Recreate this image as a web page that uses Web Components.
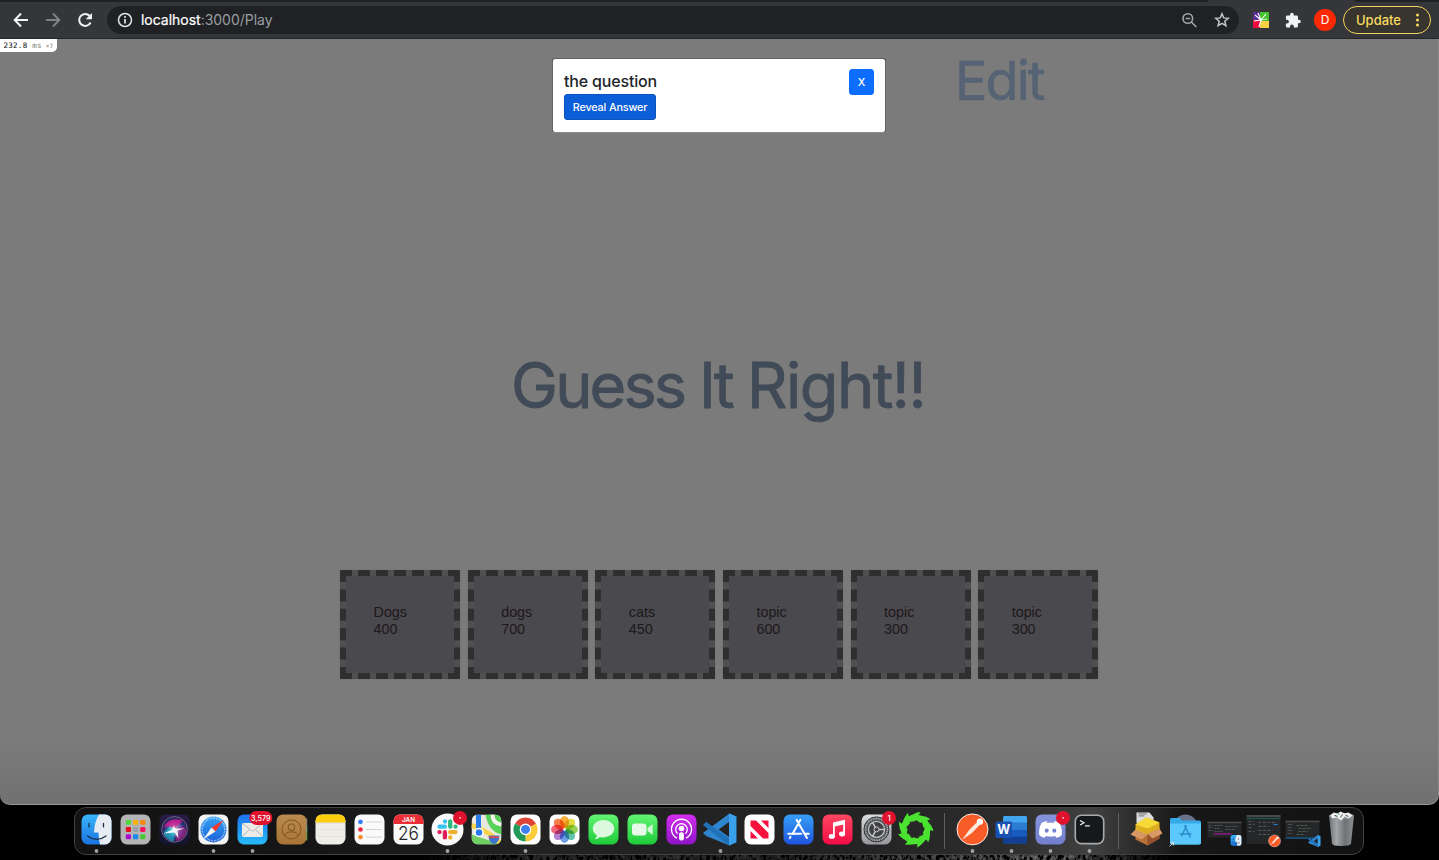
<!DOCTYPE html>
<html lang="en">
<head>
<meta charset="utf-8">
<title>Guess It Right</title>
<style>
html,body{margin:0;height:100%;background:#000;overflow:hidden}
body{font-family:Inter,"Liberation Sans",sans-serif}
</style>
</head>
<body>
<desktop-view></desktop-view>
<script>
const define = (name, html, setup) => {
  const tpl = document.createElement('template');
  tpl.innerHTML = html;
  customElements.define(name, class extends HTMLElement {
    constructor() {
      super();
      this.attachShadow({mode: 'open'}).appendChild(tpl.content.cloneNode(true));
    }
    connectedCallback() { if (setup) setup(this, this.shadowRoot); }
  });
};

/* A line of text tracked so that it fills the given width. */
define('fit-line', `<style>:host{display:inline-block;white-space:pre}span{display:inline-block}</style><span><slot></slot></span>`, (el, root) => {
  const s = root.querySelector('span');
  const n = el.textContent.length;
  const w = s.getBoundingClientRect().width;
  if (w) s.style.letterSpacing = ((+el.getAttribute('width') - w) / n) + 'px';
});

define('browser-bar', `<style>
:host{display:flex;flex-direction:column;height:39px;box-sizing:border-box;background:#35363a;border-bottom:1px solid #252628;color:#fff}
.tabs{display:flex;justify-content:space-between;height:2px}
.tabs i{background:#202124;width:1208px;border-bottom-right-radius:3px}
.tabs i+i{width:84px;border-radius:0 0 0 3px}
.bar{display:flex;align-items:center;height:36px}
svg{display:block;flex:none}
.nav{display:flex;gap:14px;padding-left:12px;width:107px;box-sizing:border-box}
.box{display:flex;align-items:center;width:1132px;height:28px;border-radius:14px;background:#202124;box-sizing:border-box;padding:0 8.500px 0 9px}
.url{flex:1;margin-left:7px;font-size:14px;line-height:20px;color:#9a9da1}
.url b{font-weight:400;color:#fff;-webkit-text-stroke:.2px #fff}
.ext{display:flex;align-items:center;margin-left:14px}
.av{width:22px;height:22px;border-radius:50%;background:#fc2a04;font-size:12px;line-height:22px;text-align:center;margin:0 7px 0 13px}
.up{display:flex;align-items:center;justify-content:space-between;box-sizing:border-box;width:88px;height:28px;border:1px solid #f4d35c;border-radius:14px;background:#37352e;color:#f9da63;padding:0 8px 0 12px;font-size:13px;font-weight:500}
</style>
<div class="tabs"><i></i><i></i></div>
<div class="bar">
<div class="nav">
<svg width="18" height="18" viewBox="0 0 18 18" fill="none" stroke="#f1f3f4" stroke-width="2"><path d="M16 9H3M9 2.500 2.700 9 9 15.500"/></svg>
<svg width="18" height="18" viewBox="0 0 18 18" fill="none" stroke="#7f8184" stroke-width="2"><path d="M2 9h13M9 2.500 15.300 9 9 15.500"/></svg>
<svg width="18" height="18" viewBox="0 0 18 18"><path d="M14.600 11.500a6 6 0 1 1-1-6.700" fill="none" stroke="#f1f3f4" stroke-width="2"/><path d="M16 2v6.300H9.700z" fill="#f1f3f4"/></svg>
</div>
<div class="box">
<svg width="18" height="18" viewBox="0 0 18 18" fill="none" stroke="#e4e5e7" stroke-width="1.500"><circle cx="9" cy="9" r="6.500"/><path d="M9 8v4.600M9 5v1.700" stroke-width="1.700"/></svg>
<div class="url"><fit-line width="131.500"><b>localhost</b>:3000/Play</fit-line></div>
<svg width="18" height="18" viewBox="0 0 18 18" fill="none" stroke="#a2a4a7" stroke-width="1.600"><circle cx="6.800" cy="7.500" r="4.800"/><path d="m10.300 11 5 5M4.500 7.500h4.600"/></svg>
<svg style="margin-left:14px" width="18" height="18" viewBox="0 0 18 18" fill="none" stroke="#c3c5c8" stroke-width="1.500"><path d="m9 2.800 1.700 4.100 4.500.4-3.400 2.900 1.100 4.400L9 12.300 5.100 14.600l1.100-4.400-3.400-2.900 4.500-.4z"/></svg>
</div>
<div class="ext">
<svg width="16" height="16" viewBox="0 0 16 16"><path fill="#5a2d91" d="M0 0h7v8H0z"/><path fill="#44c22d" d="M7 0h9v9H7z"/><path fill="#ee0a3c" d="M0 8h7v8H0z"/><path fill="#f8cf45" d="M7 9h9v7H7z"/><path d="M8 8 2 3M8 8 5 1M8 8l5-6M8 8l-7 1M8 8l-2 7" stroke="#fff" stroke-width="1.100"/><path d="m8 8 6-1" stroke="#fff" stroke-width=".8"/></svg>
<svg style="margin-left:15px" width="18" height="17" viewBox="0 0 24 24" fill="#f1f3f4"><path d="M20.500 11H19V7c0-1.100-.9-2-2-2h-4V3.500a2.500 2.500 0 0 0-5 0V5H4c-1.100 0-2 .9-2 2v3.800h1.500a2.700 2.700 0 0 1 0 5.400H2V20c0 1.100.9 2 2 2h3.800v-1.500a2.700 2.700 0 0 1 5.400 0V22H17c1.100 0 2-.9 2-2v-4h1.500a2.500 2.500 0 0 0 0-5z"/></svg>
<div class="av" style="margin-left:12px">D</div>
<div class="up"><fit-line width="45">Update</fit-line><svg width="10" height="16" viewBox="0 0 10 16" fill="#f9da63"><circle cx="5.500" cy="3" r="1.500"/><circle cx="5.500" cy="8" r="1.500"/><circle cx="5.500" cy="13" r="1.500"/></svg></div>
</div>
</div>`);

define('topic-card', `<style>
:host{display:block;box-sizing:border-box;width:120px;height:109px;border:6px dashed #2f2f2f;border-radius:1px;background-image:linear-gradient(#4a494d,#4a494d),linear-gradient(#4f4f50,#4f4f50);background-clip:padding-box,border-box;background-origin:border-box;box-shadow:0 0 1px #555;padding:27.500px 0 0 27.600px;font:14.300px/17px "Liberation Sans",Arial,sans-serif;color:#1d1819}
</style><slot name="topic"></slot><br><slot name="points"></slot>`);

define('question-dialog', `<style>
:host{display:flex;justify-content:space-between;align-items:flex-start;box-sizing:border-box;width:334px;height:75px;background:#fff;border:1px solid #636363;border-bottom-color:#8b8b8b;border-radius:3px;padding:10px 11px 0 11px;background-clip:padding-box}
h5{margin:0;font-size:16px;font-weight:500;line-height:24px;color:#212529}
button{display:block;box-sizing:border-box;border:1px solid #0a53be;border-radius:3px;background:#0b5ed7;color:#fff;height:26px;width:92px;padding:1px 0 0;font:500 10.800px/16px Inter,sans-serif;text-align:center}
.x{width:25px;background:#0d6efd;border-color:#0d6efd}
</style>
<div><h5><fit-line width="93">the question</fit-line></h5><button style="margin-top:1px"><fit-line width="74.500">Reveal Answer</fit-line></button></div>
<button class="x">X</button>`);

define('game-page', `<style>
:host{position:relative;display:block;box-sizing:border-box;height:766px;background:linear-gradient(#7b7b7b 0,#7b7b7b 700px,#717171 764px);border-radius:0 0 10px 10px;border-bottom:1px solid #979797;border-right:1px solid #8a8a8a;overflow:hidden}
.edit{height:84px;line-height:83px;padding-left:955px;font-size:54px;color:#566374;-webkit-text-stroke:.6px #566374}
h1{margin:214px 0 0;height:96px;line-height:96px;padding-left:511px;font-size:63px;font-weight:400;color:#414a57;-webkit-text-stroke:.8px #414a57}
.cards{display:flex;gap:7.640px;margin:137px 0 0 340px}
.prof{position:absolute;left:0;top:0;width:57px;height:13px;background:#fff;border-radius:0 0 5px 0;box-sizing:border-box;padding-left:3.500px;font:7.500px/13px "DejaVu Sans Mono",monospace;color:#111;white-space:pre}
.prof i{font-style:normal;color:#777}
question-dialog{position:absolute;left:552px;top:19px}
</style>
<div class="edit"><fit-line width="88.500">Edit</fit-line></div>
<h1><fit-line width="188">Guess </fit-line><fit-line width="48">It </fit-line><fit-line width="178">Right!!</fit-line></h1>
<div class="cards"></div>
<div class="prof"><fit-line width="50">232.8<i> ms</i><i style="font-size:6px"> ×7</i></fit-line></div>
<question-dialog></question-dialog>`, (el, root) => {
  root.querySelector('.cards').innerHTML = [['Dogs',400],['dogs',700],['cats',450],['topic',600],['topic',300],['topic',300]]
    .map(([t, p]) => `<topic-card><span slot="topic">${t}</span><span slot="points">${p}</span></topic-card>`).join('');
});

/* Dock artwork: every icon is drawn round its own centre. */
const grad = (id, a, b) => `<linearGradient id="${id}" x2="0" y2="1"><stop stop-color="${a}"/><stop offset="1" stop-color="${b}"/></linearGradient>`;
const tile = fill => `<rect x="-15" y="-15" width="30" height="30" rx="6.500" fill="${fill}"/>`;
const gtile = (a, b) => `<defs>${grad('g', a, b)}</defs>` + tile('url(#g)');
const badge = (t, w = 14, cx = 12.500, size = 7.800) => `<rect x="${cx - w / 2}" y="-18.500" width="${w}" height="14" rx="7" fill="#e0122d"/>` +
  (t ? `<text x="${cx}" y="-8.700" font-size="${size}" font-weight="500" text-anchor="middle" fill="#fff">${t}</text>` : `<circle cx="12.600" cy="-11.500" r=".8" fill="#fff"/>`);
const rep = (n, f) => Array.from({length: n}, (_, i) => f(i)).join('');
const code = '<path d="M9 16 15.800 12.800V-12.800L9-16-17.500 3.500l3.200 3.200z" fill="#2f86cf"/><path d="M-17.500-4.500l3.200-3.200L9 9.500V16l-2-1z" fill="#2072b8"/><path d="M8.500-16 15.800-12.800V12.800L8.500 16z" fill="#3ba0ea"/><path d="M8.500-7.500v15L-1.800 0z" fill="#222"/>';
const finder = gtile('#38b5fb', '#1b73df') + '<path d="M2.500-15H8.500a6.500 6.500 0 0 1 6.500 6.500v17a6.500 6.500 0 0 1-6.500 6.500H3.500Q2 9 2 3H-2.500Q-2-8 2.500-15Z" fill="#e7ebf2"/><path d="M-7.500-6v3.500M7-6v3.500M-9 6.500q9 7 18.500 0" stroke="#1b3048" stroke-width="1.300" fill="none" stroke-linecap="round"/>';
const shot = (h, lines) => `<rect x="-17" y="${-h / 2}" width="34" height="${h}" fill="#242627"/>` + lines;
const postman = (r = 15.500) => `<circle r="${r}" fill="#fa5c28" stroke="#fff" stroke-width="${r / 17}"/><path d="M${-r * .68} ${r * .68} L${-r * .2} ${r * .02} ${r * .3} ${-r * .48} ${r * .46} ${-r * .28} ${-r * .02} ${r * .22}Z" fill="#fce8dd"/><circle cx="${r * .48}" cy="${-r * .5}" r="${r * .2}" fill="#fff"/>`;

const ICONS = {
  finder,
  launchpad: tile('#b4b4b6') + rep(9, i => `<rect x="${-9.700 + (i % 3) * 7.200}" y="${-9.500 + (i / 3 | 0) * 7.200}" width="5.200" height="4.900" rx="1.200" fill="${['#4ddb38','#ffb100','#f98507','#e30d1c','#9aa0a6','#f8145f','#a80bd0','#1589ef','#46c734'][i]}"/>`),
  siri: gtile('#2b1c47', '#12152f') + '<defs><radialGradient id="r"><stop stop-color="#fff"/><stop offset=".3" stop-color="#6cc9d6"/><stop offset=".65" stop-color="#2f3f8f"/><stop offset="1" stop-color="#2a1846"/></radialGradient></defs><circle r="12.800" fill="url(#r)" stroke="#8b88a8" stroke-width=".7"/><path d="M-11-2Q-5-13 8-9 5-4 0-1-5-4-11-2Z" fill="#e6178f" opacity=".75"/><path d="M0 0Q8-8 12 2 10 10 2 12Z" fill="#b71f85" opacity=".6"/><path d="M0 0Q-10-2-11 5-7 11-1 12Z" fill="#1bb8c9" opacity=".65"/><path d="m-11 4 9-4 1-4 2 3 9 0-7 2 1 8-4-6z" fill="#fff" opacity=".9"/>',
  safari: tile('#f3f3f4') + `<defs>${grad('s', '#35a4f4', '#1b61d8')}</defs><circle r="13" fill="url(#s)"/><circle r="11.300" fill="none" stroke="#fff" stroke-width="1.500" stroke-dasharray=".5 1"/><path d="M10-9.500 2 2-2-2z" fill="#f23b30"/><path d="M-10 9.500-2-2 2 2z" fill="#f4f5f7"/>`,
  mail: gtile('#1c72f0', '#27baf8') + `<rect x="-10.500" y="-6.500" width="21" height="14" rx="1.500" fill="#ecebe8"/><path d="m-10 -6 10 8 10-8M-10 7l7-7M10 7 3 0" fill="none" stroke="#a5a8ab" stroke-width=".8"/>` + badge('3,579', 23, 8.300, 7.200),
  contacts: '<path d="M14-11h1.800v7H14z" fill="#777"/><path d="M14-4h1.800v7H14z" fill="#57b6a8"/><path d="M14 3h1.800v8H14z" fill="#4fa04b"/>' + gtile('#bb8b4f', '#a87437') + '<g fill="none" stroke="#80551f" stroke-width="1"><circle r="9.500"/><circle cy="-2.200" r="3.400"/><path d="M-6.500 6.500q0-4 6.500-4t6.500 4"/></g>',
  notes: tile('#efede8') + '<path d="M-15-7v-1.500A6.500 6.500 0 0 1-8.500-15h17A6.500 6.500 0 0 1 15-8.500V-7z" fill="#fbcf0d"/><path d="M-15-6.400h30" stroke="#b9b39b" stroke-width=".6" stroke-dasharray="1 1"/><path d="M-15 0h30M-15 7h30" stroke="#dcd9d4" stroke-width=".6"/>',
  reminders: tile('#fafafa') + ['#2c7cf2', '#ef2240', '#f08a2b'].map((c, i) => `<circle cx="-9" cy="${-7.500 + i * 7.600}" r="2.100" fill="${c}" stroke="${c}55" stroke-width="1.200"/><path d="M-3.500 ${-7.500 + i * 7.600}h16" stroke="#cdcdcf" stroke-width=".8"/>`).join(''),
  calendar: tile('#fbfbfb') + '<path d="M-15-5.500v-3A6.500 6.500 0 0 1-8.500-15h17A6.500 6.500 0 0 1 15-8.500v3z" fill="#ea2d36"/><text x="0" y="-7.300" font-size="6.300" font-weight="600" text-anchor="middle" fill="#fff">JAN</text><text x="0" y="11" font-size="19" font-weight="300" text-anchor="middle" fill="#222" textLength="21" lengthAdjust="spacingAndGlyphs">26</text>',
  slack: '<circle r="16" fill="#fafafa"/><g stroke-width="4.300" stroke-linecap="round"><path d="M-2.500-8v.1M-8-2.700h5.300" stroke="#37c3ef"/><path d="M2.700-8v5.300M8-2.700h.1" stroke="#2fb67c"/><path d="M8 2.700H2.700M2.700 8v.1" stroke="#ecb12e"/><path d="M-2.600 8V2.700M-8 2.700h.1" stroke="#e01e5a"/></g>' + badge(''),
  maps: '<defs><clipPath id="c"><rect x="-15" y="-15" width="30" height="30" rx="6.500"/></clipPath></defs><g clip-path="url(#c)"><path d="M-15-15h30v30h-30z" fill="#e9e8df"/><path d="M-1-15H15V5Q2 2-1-15Z" fill="#57d158"/><path d="M6-15Q6-6 15-5" stroke="#f5f4ee" stroke-width="4" fill="none"/><path d="M-15 5 15 15H-15z" fill="#6fcf62"/><path d="M-15-4Q3 2 15 15" stroke="#fbd44d" stroke-width="5" fill="none"/><path d="M-8-15V2" stroke="#2879e9" stroke-width="5"/></g><circle cx="-7.500" cy="3" r="4" fill="#2b79ea" stroke="#fff" stroke-width="1.500"/><path d="M2 6h11q0 7-5.500 8.500Q2 13 2 6Z" fill="#3c75cf"/><path d="M2.500 7h10v1.700h-10z" fill="#e24747"/>',
  chrome: tile('#fff') + '<path d="M0 0-10.400-6A12 12 0 0 1 10.400-6Z" fill="#de4437"/><path d="M0 0 10.400-6A12 12 0 0 1 0 12Z" fill="#fbcb3c"/><path d="M0 0 0 12A12 12 0 0 1-10.400-6Z" fill="#239b58"/><path d="M0-6H10.400L0 0Z" fill="#de4437"/><circle r="5.800" fill="#fff"/><circle r="4.500" fill="#3f7fee"/>',
  photos: tile('#fff') + ['#f8a012', '#e0d820', '#84cc3a', '#45b99d', '#4f8fe0', '#a56ac8', '#ee4a62', '#f4672a'].map((c, i) => `<ellipse cy="-7.300" rx="4.600" ry="6.200" fill="${c}" opacity=".85" style="mix-blend-mode:multiply" transform="rotate(${i * 45})"/>`).join(''),
  messages: gtile('#62f572', '#1ecb3a') + '<path d="M0-9.500c6 0 10.700 3.900 10.700 8.700S6 8 0 8q-1.800 0-3.500-.5-2 2.300-5.200 2.300 2-1.700 2-3.900Q-10.700 3.500-10.700-.8C-10.700-5.600-6-9.500 0-9.500Z" fill="#dcf8df"/>',
  facetime: gtile('#62f572', '#1ecb3a') + '<rect x="-10.500" y="-6" width="14.500" height="12" rx="3" fill="#e6f9e8"/><path d="m5-1.500 5.200-4v11L5 1.500z" fill="#d3f5d8"/>',
  podcasts: gtile('#d52df0', '#8e14c6') + '<g fill="none" stroke="#fff" stroke-width="1.300"><path d="M-4.500 8.800a10 10 0 1 1 9 0"/><path d="M-4 4.300a5.800 5.800 0 1 1 8 0"/></g><circle r="2.800" cy="-.9" fill="#fff"/><rect x="-2.400" y="2.800" width="4.800" height="8.400" rx="2" fill="#fff"/>',
  vscode: code,
  news: tile('#fff') + '<path d="M-9-9h5.500L9 3.500V9H3.500L-9-3.500z" fill="#f5123f"/><path d="M1.500-9H9v7.500zM-9 1.500V9h7.500z" fill="#f5123f"/>',
  appstore: gtile('#36a0f8', '#2054df') + '<g stroke="#fff" stroke-width="2" stroke-linecap="round"><path d="M1.800-9.500-6 4.500M-1.800-9.500 8.500 8.500M-10.300 4.300h13M7 4.300h3.300M-8 7.500l-.7 1.200"/></g>',
  music: gtile('#fc4861', '#f30b45') + '<g fill="#fff"><path d="M-4.500-7 7.500-9.700V4.500H5.700V-4.800L-2.700-2.900V7h-1.800z"/><ellipse cx="-5.700" cy="7" rx="3.100" ry="2.400"/><ellipse cx="4.600" cy="4.600" rx="3.100" ry="2.400"/></g>',
  settings: gtile('#d9dce0', '#96989c') + '<circle r="12.500" fill="#535558" stroke="#333" stroke-width="1"/><circle r="11" fill="none" stroke="#b4b6b9" stroke-width="1.600" stroke-dasharray="1 .7"/><circle r="8" fill="#3e4043" stroke="#bfc0c3" stroke-width="1.300"/><path d="M0 0h8M0 0-4-7M0 0l-4 7" stroke="#c7c8ca" stroke-width="1.500"/><circle r="2.500" fill="#444" stroke="#c7c8ca" stroke-width="1"/>' + badge('1'),
  swirl: '<circle r="12" fill="none" stroke="#4be331" stroke-width="5.500"/>' + rep(9, i => `<path d="M-8-11Q-2-17 5-17.500 3-15.500 3-11Z" fill="#4be331" transform="rotate(${i * 40})"/><path d="M-2-9.500 3-7.500 5-10Z" fill="#4be331" transform="rotate(${i * 40 + 15})"/>`),
  postman: postman(),
  word: '<rect x="-8.500" y="-13.500" width="24" height="27.500" rx="1.500" fill="#185abd"/><path d="M-8.500-6.600v-5.400q0-1.500 1.500-1.500H14q1.500 0 1.500 1.500v5.400z" fill="#43a5ee"/><path d="M-8.500-6.600h24V.4h-24z" fill="#2b7cd3"/><path d="M-8.500 7.300h24V12.500q0 1.500-1.500 1.500H-7q-1.500 0-1.500-1.500z" fill="#123f91"/><rect x="-16" y="-8" width="16.500" height="16.500" rx="1.500" fill="#1a50af"/><text x="-7.700" y="4.800" font-size="12.500" font-weight="700" text-anchor="middle" fill="#fff">W</text>',
  discord: gtile('#8794dc', '#7180cf') + '<path d="M-4-6.500-3-8.300Q-7-8-9-6.300-12-1-11.300 5.500-9 8-6 8.300L-4.700 6.500Q0 7.700 4.700 6.500L6 8.300Q9 8 11.300 5.500 12-1 9-6.300 7-8 3-8.300L4-6.500Q0-7.300-4-6.500Z" fill="#fff"/><ellipse cx="-3.800" cy="1.200" rx="2" ry="2.200" fill="#7785d2"/><ellipse cx="3.800" cy="1.200" rx="2" ry="2.200" fill="#7785d2"/>' + badge(''),
  terminal: '<rect x="-14.200" y="-14.200" width="28.400" height="28.400" rx="6" fill="#16181a" stroke="#a7abae" stroke-width="1.600"/><path d="m-9.500-9 4 2.300-4 2.300M-4.500-3.500h4.800" fill="none" stroke="#f2f2f2" stroke-width="1.200"/>',
  box: '<path d="M-10-17h13l4 5v6h-17z" fill="#dedede"/><path d="M-8-15.500h8M-8-13.500h6" stroke="#666" stroke-width=".9"/><path d="M-11-1 0 4 13-2v11L1 16-11 10z" fill="#b77138"/><path d="M1 4 13-2v11L1 16z" fill="#94532a"/><path d="m-11-5 11-7 13 5v6L1 5-11 1z" fill="#e6b71e" opacity=".95"/><path d="m-11-5 11-7 13 5L1-1z" fill="#f7da38"/><path d="m-11 0-5 5 11 5 6-5zM13-1l3 5L6 9 1 4z" fill="#d89963"/>',
  folder: '<circle cy="-3" r="12" fill="#68738b"/><path d="M-15.500-10q0-1.500 1.500-1.500h8l2.500 2.500H14q1.500 0 1.500 1.500V13q0 2-2 2h-27q-2 0-2-2z" fill="#36a9e8"/><path d="M-15.500-6h31V13q0 2-2 2h-27q-2 0-2-2z" fill="#5ac8fa"/><path d="M1-4-4 7M-1-4 5 8M-6 4.500H6" stroke="#2687c3" stroke-width="1.300"/><path d="m-16 17 4-4m-3 0h3v3" stroke="#ddd" fill="none"/>',
  winfinder: shot(16, '<path d="M-17-7h34" stroke="#4b4c4e" stroke-width="1.500"/><path d="M-16-4h4M-16-2h4M-16 1h4M-10-4h8M-10-1h6M-10 2h8M1-3h13M1 0h10" stroke="#67686a" stroke-width=".8" stroke-dasharray="2 1"/><path d="M-11 4.500H7" stroke="#a5199b" stroke-width="1.200"/>') + `<g transform="translate(11.500 11) scale(.36)">${finder}</g>`,
  winpostman: shot(29, '<path d="M-17-13.500h34" stroke="#545658" stroke-width="1.500"/><path d="M-17-11h34" stroke="#1d5e4f"/><path d="M-15-8h5M-15-5h6M-15-2h4M-15 2h6M-5-7h18M-5-3h10M-5 1h14M-5 5h11" stroke="#66696b" stroke-width=".8" stroke-dasharray="3 1.500"/><path d="M10-5h4" stroke="#2589e8"/>') + `<g transform="translate(11 11.500)">${postman(6)}</g>`,
  wincode: shot(18, '<path d="M-17-8h34" stroke="#47494b" stroke-width="1.500"/><path d="M-15-5h5M-15-2h4M-15 1h5M-15 4h4" stroke="#555b60" stroke-width=".8"/><path d="M-6-4H5M-4-1H9M-4 2H5M-6 5H2" stroke="#53705c" stroke-width=".8" stroke-dasharray="3 1"/><path d="M-17 8.700h34" stroke="#1373bd" stroke-width="1"/>') + `<g transform="translate(12 11.500) scale(.37)">${code}</g>`,
  trash: '<defs><linearGradient id="t"><stop stop-color="#6c7074"/><stop offset=".3" stop-color="#a4a7a9"/><stop offset=".65" stop-color="#6f7275"/><stop offset="1" stop-color="#8f9295"/></linearGradient></defs><path d="M-12.500-14-9.500 14Q-9 16.500 0 16.500T9.500 14L12.500-14Z" fill="url(#t)"/><ellipse cy="-13.500" rx="12.500" ry="3.200" fill="#8b8e90"/><path d="m-11-14 3-3 4 1 3-2 4 2 4-1 4 3-4 3-4-2-3 4-5-3-4 1z" fill="#f0f0ee"/><path d="m-7-14 3 1M4-14l3 1M-1-12l2-3" stroke="#444" stroke-width="1"/><path d="m-4-16 2 1" stroke="#2aa398"/>'
};

define('dock-icon', `<style>:host{display:block;width:39.030px;height:47px;flex:none}svg{display:block;overflow:visible;font-family:Inter,sans-serif}g{isolation:isolate}</style><div></div>`, (el, root) => {
  root.querySelector('div').innerHTML = `<svg width="39" height="47" viewBox="-19.500 -22.400 39 47"><g>${ICONS[el.getAttribute('name')]}</g>${el.hasAttribute('open') ? '<circle cy="21.600" r="1.900" fill="#a1a1a1"/>' : ''}</svg>`;
});

define('app-dock', `<style>
:host{display:flex;box-sizing:border-box;width:1290px;height:48px;border:1px solid #424242;border-radius:12px;background:linear-gradient(90deg,#131313 0,#151515 18%,#222 35%,#232323 60%,#2c2c2c 72%,#414141 79%,#343434 81%,#171717 86%,#121212);padding-left:1.700px}
i{flex:none;width:1px;height:36px;margin:5px 8.500px 0;background:#606060}
dock-icon{margin-top:-1px}
</style>`, (el, root) => {
  const open = ['finder', 'safari', 'mail', 'slack', 'chrome', 'vscode', 'postman', 'word', 'discord', 'terminal'];
  const names = 'finder launchpad siri safari mail contacts notes reminders calendar slack maps chrome photos messages facetime podcasts vscode news appstore music settings swirl | postman word discord terminal | box folder winfinder winpostman wincode trash'.split(' ');
  root.innerHTML += names.map(n => n === '|' ? '<i></i>' : `<dock-icon name="${n}" ${open.includes(n) ? 'open' : ''}></dock-icon>`).join('');
});

define('desktop-view', `<style>
:host{display:flex;flex-direction:column;width:1439px;height:860px;background:#000;overflow:hidden}
.desk{position:relative;flex:1;padding:2px 0 0 74px}
.wall{position:absolute;left:420px;top:50px}
</style>
<browser-bar></browser-bar>
<game-page></game-page>
<div class="desk"><svg class="wall" width="750" height="6"><filter id="n" x="0" y="0" width="1" height="1"><feTurbulence type="fractalNoise" baseFrequency=".3 .2" numOctaves="3" seed="4"/><feColorMatrix values=".9 0 0 0 -.36 .9 0 0 0 -.36 .9 0 0 0 -.36 0 0 0 0 1"/></filter><linearGradient id="f"><stop stop-opacity="1"/><stop offset=".15" stop-opacity=".7"/><stop offset=".5" stop-opacity=".7"/><stop offset=".85" stop-opacity=".3"/><stop offset="1" stop-opacity="1"/></linearGradient><rect width="750" height="6" filter="url(#n)"/><rect width="752" height="8" x="-1" y="-1" fill="url(#f)"/></svg><app-dock></app-dock></div>`);
</script>
</body>
</html>
